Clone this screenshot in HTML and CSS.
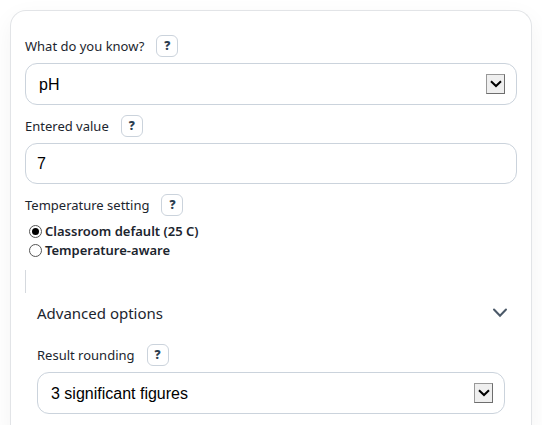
FILE: index.html
```html
<!DOCTYPE html>
<html lang="en">
<head>
  <meta charset="utf-8">
  <meta name="viewport" content="width=device-width, initial-scale=1.0">
  <title>pH calculator</title>
  <link rel="stylesheet" href="styles.css">
</head>

<body>
  <form class="card">
    <div class="field">
      <div class="field-head">
        <label for="known">What do you know?</label>
        <button type="button" class="help" aria-label="Help: what do you know">?</button>
      </div>
      <div class="select-wrap">
        <select id="known" class="control select">
          <option>pH</option>
        </select>
        <span class="arrow">
          <svg width="12" height="8" viewBox="0 0 12 8"><path d="M1 1.2 L6 6 L11 1.2"/></svg>
        </span>
      </div>
    </div>

    <div class="field">
      <div class="field-head">
        <label for="value">Entered value</label>
        <button type="button" class="help" aria-label="Help: entered value">?</button>
      </div>
      <input id="value" class="control" type="text" value="7">
    </div>

    <div class="field" role="radiogroup" aria-labelledby="temp-label">
      <div class="field-head">
        <span id="temp-label">Temperature setting</span>
        <button type="button" class="help" aria-label="Help: temperature setting">?</button>
      </div>
      <div class="radios">
        <label class="radio"><input type="radio" name="temp" checked>Classroom default (25 C)</label>
        <label class="radio"><input type="radio" name="temp">Temperature-aware</label>
      </div>
    </div>

    <div class="rule"></div>

    <details class="advanced" open>
      <summary>
        Advanced options
        <svg width="16" height="10" viewBox="0 0 16 10"><path d="M2 1.5 L8 7.8 L14 1.5"/></svg>
      </summary>
      <div class="field">
        <div class="field-head">
          <label for="rounding">Result rounding</label>
          <button type="button" class="help" aria-label="Help: result rounding">?</button>
        </div>
        <div class="select-wrap">
          <select id="rounding" class="control select">
            <option>3 significant figures</option>
          </select>
          <span class="arrow">
            <svg width="12" height="8" viewBox="0 0 12 8"><path d="M1 1.2 L6 6 L11 1.2"/></svg>
          </span>
        </div>
      </div>
    </details>
  </form>
</body>
</html>
```

FILE: styles.css
```css
* {
  box-sizing: border-box;
}
body {
  display: flex;
  min-height: 100vh;
  margin: 0;
  padding: 10px 10px 0;
  background: #fff;
  color: #1c252e;
  font-family: "Segoe UI", "Noto Sans", sans-serif;
  font-size: 13px;
  line-height: 18px;
}
.card {
  flex: 1;
  padding: 24px 14px 10px;
  border: 1px solid #e2e4e7;
  border-bottom: 0;
  border-radius: 16px 16px 0 0;
  box-shadow: 0 8px 24px rgba(0, 0, 0, 0.05);
}
.field {
  margin-bottom: 10px;
}
.field-head {
  display: flex;
  align-items: center;
  gap: 12px;
  margin-bottom: 6px;
}
.help {
  width: 22px;
  height: 22px;
  padding: 0;
  border: 1px solid #cbd3dc;
  border-radius: 6px;
  background: #fff;
  color: #2c3e50;
  font-family: "Open Sans", sans-serif;
  font-size: 12px;
  font-weight: 800;
  line-height: 18px;
}
.control {
  display: block;
  width: 100%;
  height: 41px;
  padding: 0 11px;
  border: 1px solid #cbd3dc;
  border-radius: 12px;
  background: #fff;
  color: #000;
  font-family: "Liberation Sans", Arial, sans-serif;
  font-size: 16px;
}
.select-wrap {
  position: relative;
}
.select {
  height: 42px;
  padding: 0 40px 0 13px;
  appearance: none;
}
.arrow {
  position: absolute;
  top: 0;
  bottom: 0;
  right: 12px;
  display: flex;
  align-items: center;
  justify-content: center;
  width: 19px;
  height: 20px;
  margin: auto 0;
  border: 1px solid #6e6e6e;
  border-top-color: #999;
  border-left-color: #999;
  background: #efefef;
  pointer-events: none;
}
.arrow path {
  fill: none;
  stroke: #000;
  stroke-width: 2;
}
.radios {
  display: grid;
}
.radio {
  display: flex;
  align-items: center;
  gap: 3px;
  font-weight: 600;
  line-height: 19px;
}
.radio input {
  display: grid;
  place-items: center;
  width: 13px;
  height: 13px;
  margin: 0 0 0 4px;
  border: 1px solid #555;
  border-radius: 50%;
  appearance: none;
}
.radio input:checked::before {
  content: "";
  width: 7px;
  height: 7px;
  border-radius: 50%;
  background: #000;
}
.rule {
  height: 23px;
  border-left: 1px solid #d5d9de;
}
.advanced {
  padding: 9px 12px 0;
}
.advanced summary {
  display: flex;
  align-items: center;
  justify-content: space-between;
  margin-bottom: 20px;
  font-size: 15px;
  line-height: 22px;
  list-style: none;
}
.advanced summary svg {
  margin-right: -3px;
}
.advanced summary path {
  fill: none;
  stroke: #4b5968;
  stroke-width: 2;
  stroke-linecap: round;
}
```
